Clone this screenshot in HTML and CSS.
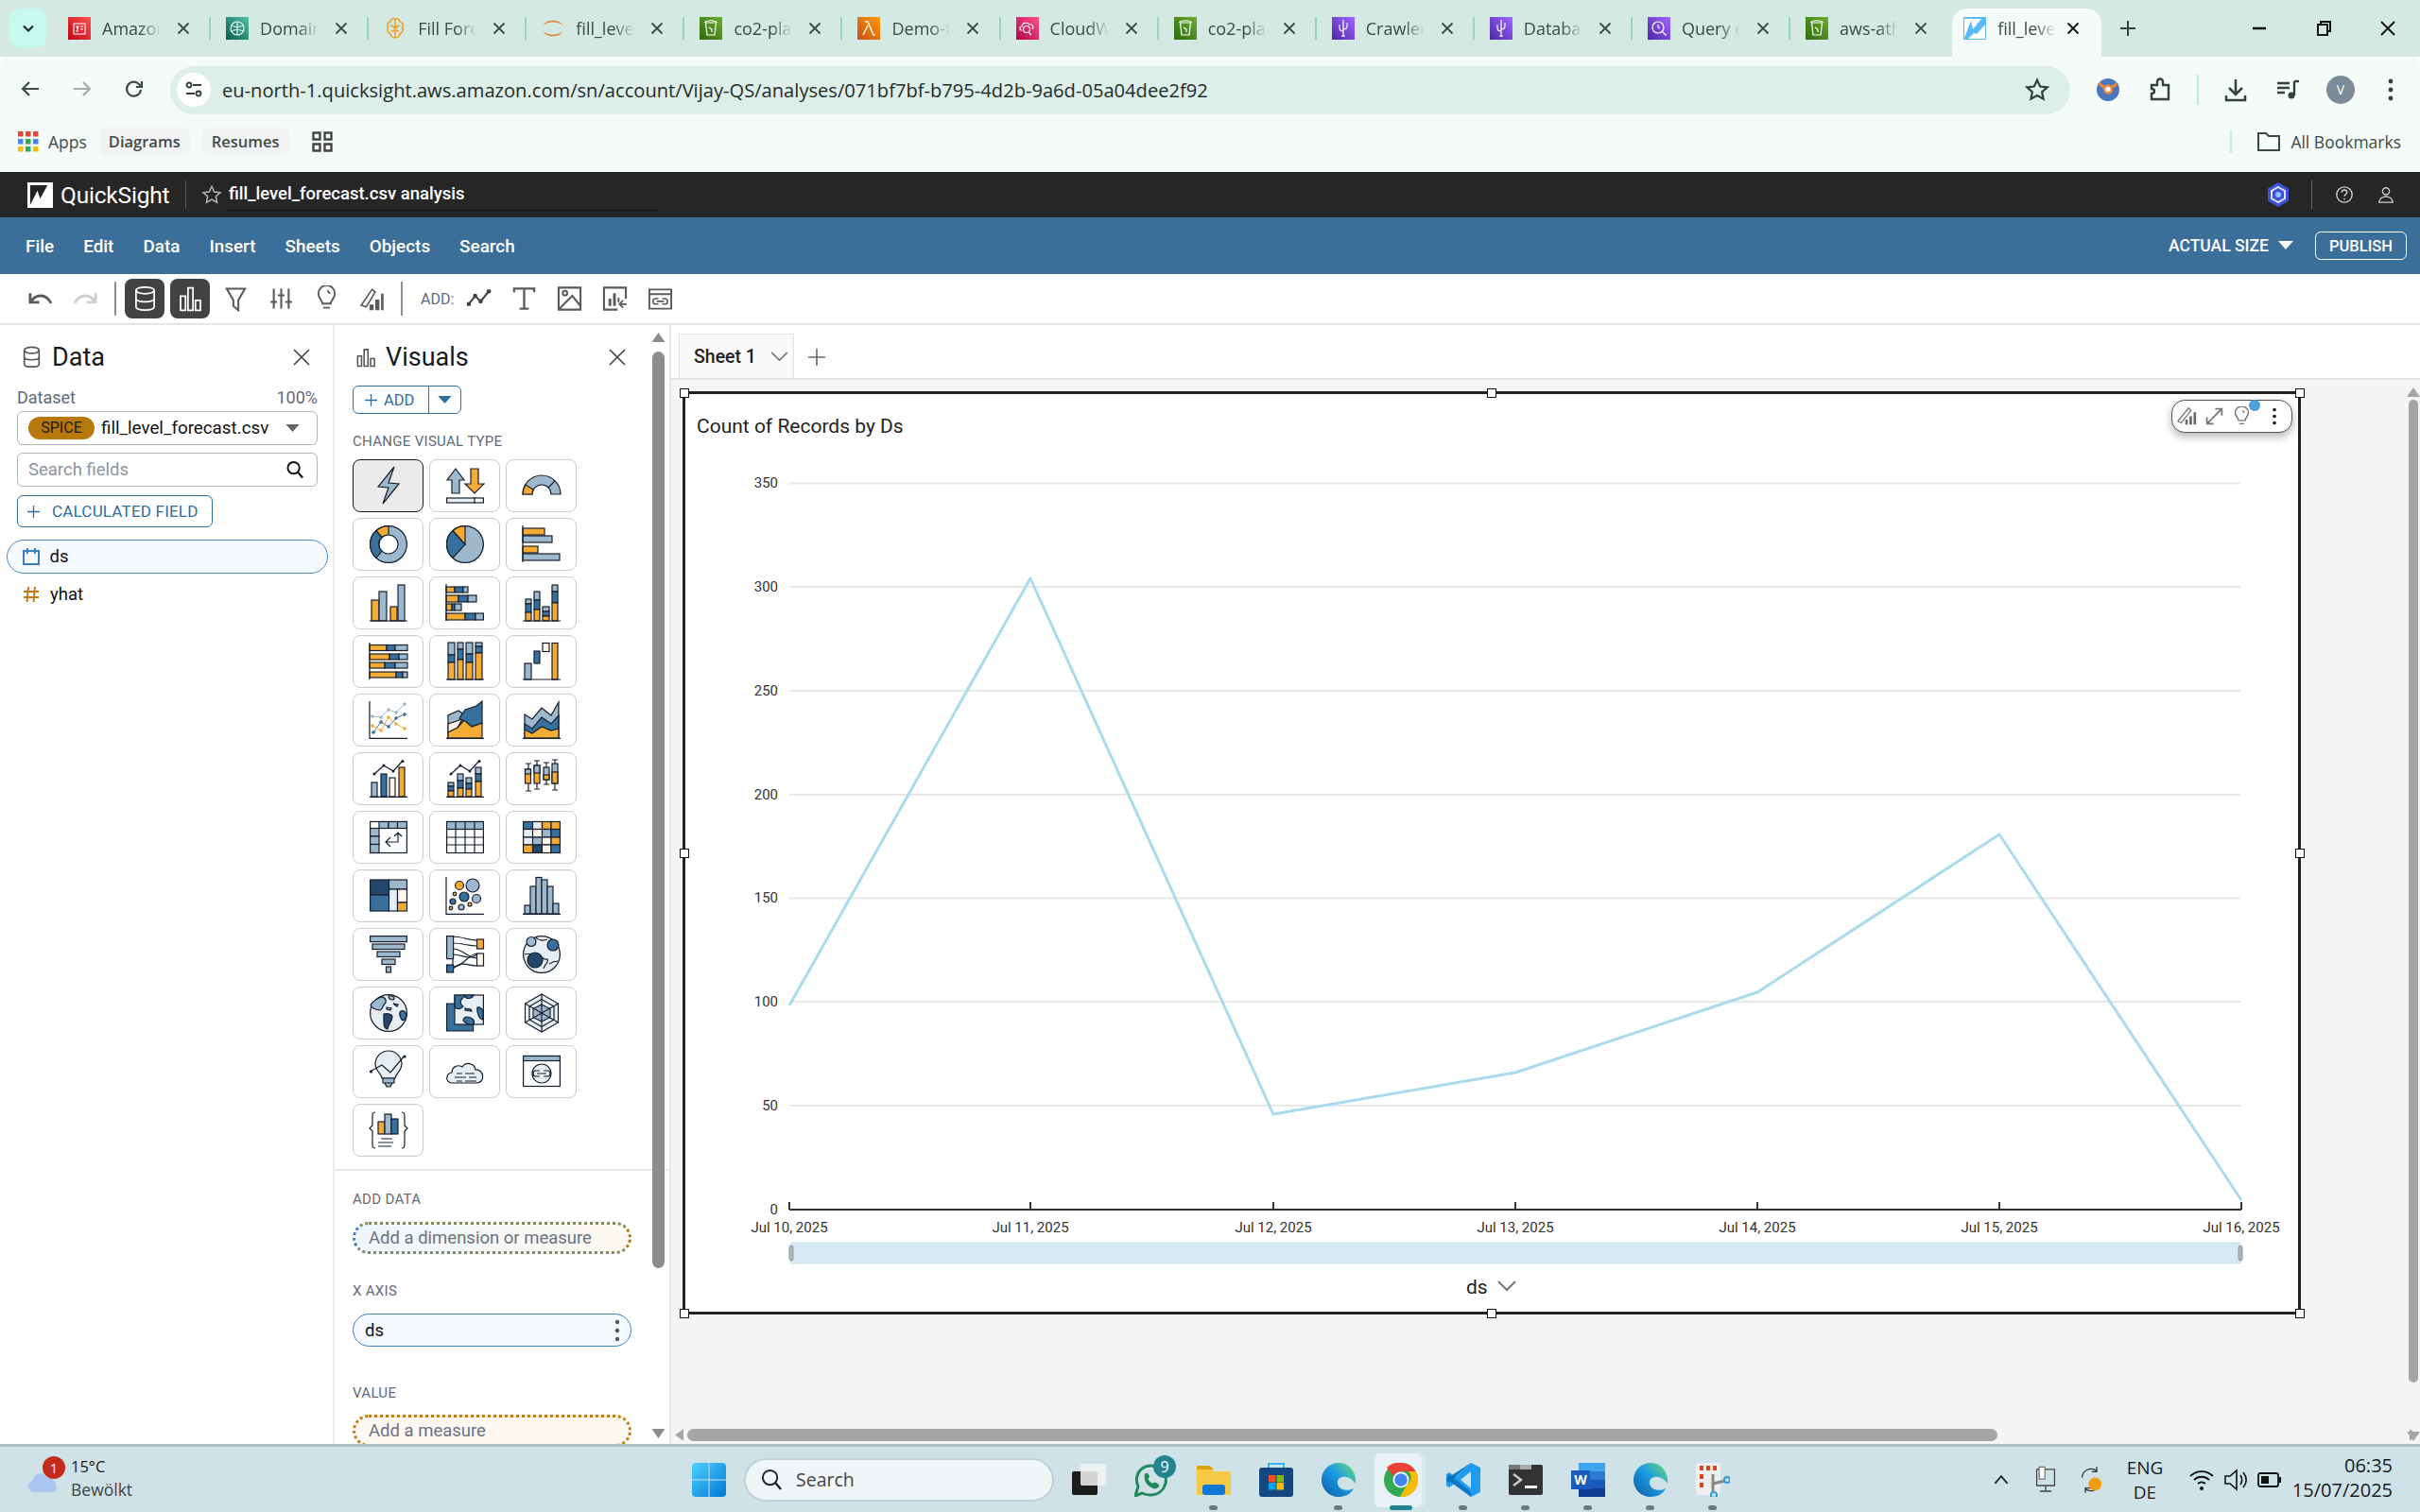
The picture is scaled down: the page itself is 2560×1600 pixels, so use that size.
FILE: index.html
```html
<!DOCTYPE html>
<html lang="en">
<head>
<meta charset="utf-8">
<title>QuickSight</title>
<link rel="stylesheet" href="styles.css">
</head>
<body>
<svg class="defs" width="0" height="0" aria-hidden="true">
  <defs>
    <linearGradient id="gGreen" x1="0" y1="1" x2="1" y2="0"><stop offset="0" stop-color="#2f6a12"/><stop offset="1" stop-color="#6aae2b"/></linearGradient>
    <linearGradient id="gPurple" x1="0" y1="1" x2="1" y2="0"><stop offset="0" stop-color="#4d27a8"/><stop offset="1" stop-color="#a166ff"/></linearGradient>
    <linearGradient id="gRed" x1="0" y1="1" x2="1" y2="0"><stop offset="0" stop-color="#bd0816"/><stop offset="1" stop-color="#ff5252"/></linearGradient>
    <linearGradient id="gTeal" x1="0" y1="1" x2="1" y2="0"><stop offset="0" stop-color="#055f4e"/><stop offset="1" stop-color="#56c0a7"/></linearGradient>
    <linearGradient id="gOrange" x1="0" y1="1" x2="1" y2="0"><stop offset="0" stop-color="#c8511b"/><stop offset="1" stop-color="#ff9900"/></linearGradient>
    <linearGradient id="gPink" x1="0" y1="1" x2="1" y2="0"><stop offset="0" stop-color="#b0084d"/><stop offset="1" stop-color="#ff4f8b"/></linearGradient>
    <linearGradient id="gEdge" x1="0" y1="1" x2="1" y2="0"><stop offset="0" stop-color="#0c59a4"/><stop offset=".55" stop-color="#1b9de2"/><stop offset="1" stop-color="#6ee06a"/></linearGradient>
    <linearGradient id="gWin" x1="0" y1="0" x2="1" y2="1"><stop offset="0" stop-color="#4fd0ff"/><stop offset="1" stop-color="#0078d4"/></linearGradient>
    <symbol id="fGreen" viewBox="0 0 24 24"><rect width="24" height="24" fill="url(#gGreen)"/><path d="M6.500 6h11l-1.500 13h-8zM5.500 6c1-3 12-3 13 0M10 11l3 2v3" fill="none" stroke="#fff" stroke-width="1.200"/></symbol>
    <symbol id="fGlue" viewBox="0 0 24 24"><rect width="24" height="24" fill="url(#gPurple)"/><path d="M12 3v18M12 15c-4 0-4-2-4-5M12 13c4 0 4-2 4-5M7 9h2M15 7h2M10 20h4" fill="none" stroke="#fff" stroke-width="1.200"/></symbol>
    <symbol id="fX" viewBox="0 0 16 16"><path d="M2.500 2.500l11 11M13.500 2.500l-11 11" fill="none" stroke="currentColor" stroke-width="1.800"/></symbol>
  </defs>
</svg>

<header class="tabstrip">
  <button class="chev"><svg width="16" height="16" viewBox="0 0 16 16"><path d="M3 5.500l5 5 5-5" fill="none" stroke="#1f2d2a" stroke-width="2.200"/></svg></button>
  <div class="tab"><svg class="fav" viewBox="0 0 24 24"><rect width="24" height="24" fill="url(#gRed)"/><path d="M6 7h12v11H6zM9 10h2l-1 3zM13 10h3M13 13h3M8 15h3" fill="none" stroke="#fff" stroke-width="1.100"/></svg><span class="tt">Amazon</span><svg class="tx"><use href="#fX"/></svg></div>
  <div class="tab"><svg class="fav" viewBox="0 0 24 24"><rect width="24" height="24" fill="url(#gTeal)"/><circle cx="12" cy="12" r="7" fill="none" stroke="#fff" stroke-width="1.100"/><path d="M12 5v14M6 9c4 2 8 2 12 0M6 15c4-2 8-2 12 0" fill="none" stroke="#fff" stroke-width="1"/></svg><span class="tt">Domain</span><svg class="tx"><use href="#fX"/></svg></div>
  <div class="tab"><svg class="fav" viewBox="0 0 24 24"><path d="M12 2c-3-1-5 1-5 3-3 1-4 4-2.500 6C3 13 4 17 7 17.500c0 3 3 5 5 4 2 1 5-1 5-4 3-.5 4-4.500 2.500-6.500C21 9 20 6 17 5c0-2-2-4-5-3zM12 2v20M7 9c2 0 3 1 5 3M17 9c-2 0-3 1-5 3M8 15l4-1M16 15l-4-1" fill="none" stroke="#f39c1f" stroke-width="1.500"/></svg><span class="tt">Fill Fore</span><svg class="tx"><use href="#fX"/></svg></div>
  <div class="tab"><svg class="fav" viewBox="0 0 24 24"><path d="M2 9C4 2 20 2 22 9 18 4 6 4 2 9zM2 15c2 7 18 7 20 0-4 5-16 5-20 0z" fill="#ea7a2c"/></svg><span class="tt">fill_level</span><svg class="tx"><use href="#fX"/></svg></div>
  <div class="tab"><svg class="fav"><use href="#fGreen"/></svg><span class="tt">co2-pla</span><svg class="tx"><use href="#fX"/></svg></div>
  <div class="tab"><svg class="fav" viewBox="0 0 24 24"><rect width="24" height="24" fill="url(#gOrange)"/><path d="M8 5h3l6 14h2M11 9l-5 10" fill="none" stroke="#fff" stroke-width="1.400"/></svg><span class="tt">Demo-f</span><svg class="tx"><use href="#fX"/></svg></div>
  <div class="tab"><svg class="fav" viewBox="0 0 24 24"><rect width="24" height="24" fill="url(#gPink)"/><path d="M6 14c-3 0-3-4 0-4 0-4 6-5 8-2 3-1 5 2 3 5M16 19l-3-3" fill="none" stroke="#fff" stroke-width="1.100"/><circle cx="11" cy="13" r="3.500" fill="none" stroke="#fff" stroke-width="1.100"/></svg><span class="tt">CloudW</span><svg class="tx"><use href="#fX"/></svg></div>
  <div class="tab"><svg class="fav"><use href="#fGreen"/></svg><span class="tt">co2-pla</span><svg class="tx"><use href="#fX"/></svg></div>
  <div class="tab"><svg class="fav"><use href="#fGlue"/></svg><span class="tt">Crawler</span><svg class="tx"><use href="#fX"/></svg></div>
  <div class="tab"><svg class="fav"><use href="#fGlue"/></svg><span class="tt">Databas</span><svg class="tx"><use href="#fX"/></svg></div>
  <div class="tab"><svg class="fav" viewBox="0 0 24 24"><rect width="24" height="24" fill="url(#gPurple)"/><circle cx="11" cy="11" r="6" fill="none" stroke="#fff" stroke-width="1.200"/><path d="M15.500 15.500l4 4M11 8v3l2 1" fill="none" stroke="#fff" stroke-width="1.200"/></svg><span class="tt">Query e</span><svg class="tx"><use href="#fX"/></svg></div>
  <div class="tab last"><svg class="fav"><use href="#fGreen"/></svg><span class="tt">aws-ath</span><svg class="tx"><use href="#fX"/></svg></div>
  <div class="tab active"><svg class="fav" viewBox="0 0 24 24"><rect width="24" height="24" fill="#59baf5"/><path d="M1 22L8 4l2 9 9-11H1zM5 23l6-6 3 1 9-10v15z" fill="#fff"/></svg><span class="tt">fill_level</span><svg class="tx dark"><use href="#fX"/></svg></div>
  <svg class="newtab" viewBox="0 0 20 20"><path d="M10 2v16M2 10h16" fill="none" stroke="#33413d" stroke-width="2"/></svg>
  <div class="winctl">
    <svg viewBox="0 0 20 20"><path d="M3 10h14" stroke="#111" stroke-width="2.500"/></svg>
    <svg viewBox="0 0 20 20"><path d="M4 6h10v11H4zM7 6V3h10v10h-3" fill="none" stroke="#111" stroke-width="2"/></svg>
    <svg viewBox="0 0 20 20"><path d="M3 3l14 14M17 3L3 17" fill="none" stroke="#111" stroke-width="1.800"/></svg>
  </div>
</header>

<nav class="addr">
  <svg class="nv" viewBox="0 0 24 24"><path d="M21 12H4M11 5l-7 7 7 7" fill="none" stroke="#3c4a46" stroke-width="2.200"/></svg>
  <svg class="nv" viewBox="0 0 24 24"><path d="M3 12h17M13 5l7 7-7 7" fill="none" stroke="#a5aeab" stroke-width="2.200"/></svg>
  <svg class="nv" viewBox="0 0 24 24"><path d="M19 13a7.500 7.500 0 1 1-2-6l3 3M20 4v6h-6" fill="none" stroke="#3c4a46" stroke-width="2.200"/></svg>
  <div class="url">
    <span class="chip"><svg width="20" height="20" viewBox="0 0 20 20"><circle cx="5" cy="5" r="2.500" fill="none" stroke="#33413d" stroke-width="1.800"/><path d="M9 5h9M2 14h9" stroke="#33413d" stroke-width="1.800"/><circle cx="15" cy="14" r="2.500" fill="none" stroke="#33413d" stroke-width="1.800"/></svg></span>
    <span class="urltext">eu-north-1.quicksight.aws.amazon.com/sn/account/Vijay-QS/analyses/071bf7bf-b795-4d2b-9a6d-05a04dee2f92</span>
    <svg class="star" viewBox="0 0 24 24"><path d="M12 2.500l2.900 6.300 6.900.8-5.100 4.600 1.400 6.800-6.100-3.400-6.100 3.400 1.400-6.800L2.200 9.600l6.900-.8z" fill="none" stroke="#33413d" stroke-width="2"/></svg>
  </div>
  <div class="navright">
    <svg class="ni" viewBox="0 0 28 28"><circle cx="14" cy="14" r="12" fill="#4a76bf"/><path d="M5 7c3 6 15 6 18 0" fill="none" stroke="#e8863a" stroke-width="3"/><circle cx="14" cy="13.500" r="4" fill="#fff" stroke="#e8863a" stroke-width="2.500"/></svg>
    <svg class="ni" viewBox="0 0 28 28"><path d="M5 9h6V5.500a3 3 0 0 1 6 0V9h6v15H5v-6c4 0 4-5 0-5z" fill="none" stroke="#33413d" stroke-width="2.400"/></svg>
    <i class="navsep"></i>
    <svg class="ni" viewBox="0 0 28 28"><path d="M14 3v15M7 12l7 7 7-7M4 20v5h20v-5" fill="none" stroke="#33413d" stroke-width="2.500"/></svg>
    <svg class="ni" viewBox="0 0 28 28"><path d="M3 7h13M3 12h13M3 17h8M21 5v15" fill="none" stroke="#33413d" stroke-width="2.400"/><path d="M21 5h5" stroke="#33413d" stroke-width="2.400"/><circle cx="18" cy="20" r="3.500" fill="#33413d"/></svg>
    <span class="avatar">V</span>
    <svg class="dots" viewBox="0 0 12 28"><circle cx="6" cy="5" r="2.400" fill="#33413d"/><circle cx="6" cy="14" r="2.400" fill="#33413d"/><circle cx="6" cy="23" r="2.400" fill="#33413d"/></svg>
  </div>
</nav>

<nav class="bookmarks">
  <svg class="appsgrid" viewBox="0 0 22 22"><g fill="#ea4335"><rect width="5.500" height="5.500"/><rect x="8" width="5.500" height="5.500"/><rect x="16" width="5.500" height="5.500"/></g><g fill="#4285f4"><rect y="8" width="5.500" height="5.500"/><rect x="8" y="8" width="5.500" height="5.500" fill="#34a853"/><rect x="16" y="8" width="5.500" height="5.500" fill="#4285f4"/></g><g fill="#fbbc04"><rect y="16" width="5.500" height="5.500"/><rect x="8" y="16" width="5.500" height="5.500" fill="#34a853"/><rect x="16" y="16" width="5.500" height="5.500"/></g></svg>
  <span class="bm apps">Apps</span>
  <span class="bmchip">Diagrams</span>
  <span class="bmchip">Resumes</span>
  <svg class="bmgroup" viewBox="0 0 22 22"><path d="M1.500 1.500h7v7h-7zM13.500 1.500h7v7h-7zM1.500 13.500h7v7h-7zM13.500 13.500h7v7h-7z" fill="none" stroke="#444" stroke-width="2.400"/></svg>
  <i class="bmsep"></i>
  <svg class="bmfolder" viewBox="0 0 26 24"><path d="M2 3h8l3 3h11v15H2z" fill="none" stroke="#3c4a46" stroke-width="2"/></svg>
  <span class="bm">All Bookmarks</span>
</nav>

<div class="qs-head">
  <svg class="qslogo" viewBox="0 0 28 28"><rect width="28" height="28" fill="#fff"/><path d="M3 25L11 9l3 9 8-15H3z" fill="#232323"/></svg>
  <span class="qsname">QuickSight</span>
  <i class="qssep"></i>
  <svg class="qsstar" viewBox="0 0 24 24"><path d="M12 2.500l2.900 6.300 6.900.8-5.100 4.600 1.400 6.800-6.100-3.400-6.100 3.400 1.400-6.800L2.200 9.600l6.900-.8z" fill="none" stroke="#b8b8b8" stroke-width="1.600"/></svg>
  <span class="qstitle">fill_level_forecast.csv analysis</span>
  <div class="qsright">
    <svg class="qsi" viewBox="0 0 28 28"><path d="M14 1l11 6.500v13L14 27 3 20.500v-13z" fill="#3f51d9"/><path d="M14 6l7 4v8l-7 4-7-4v-8z" fill="none" stroke="#dfe4ff" stroke-width="2"/><circle cx="14" cy="14" r="3" fill="#8ec5ff"/></svg>
    <i class="qssep2"></i>
    <svg class="qsi small" viewBox="0 0 22 22"><circle cx="11" cy="11" r="9" fill="none" stroke="#cfcfcf" stroke-width="1.500"/><path d="M8 8.500c0-4 6-4 6 0 0 2-3 2-3 4.500M11 15v2" fill="none" stroke="#cfcfcf" stroke-width="1.500"/></svg>
    <svg class="qsi small" viewBox="0 0 22 22"><circle cx="11" cy="7" r="4" fill="none" stroke="#cfcfcf" stroke-width="1.500"/><path d="M3 20c1-9 15-9 16 0z" fill="none" stroke="#cfcfcf" stroke-width="1.500"/></svg>
  </div>
</div>

<div class="menu">
  <span>File</span><span>Edit</span><span>Data</span><span>Insert</span><span>Sheets</span><span>Objects</span><span>Search</span>
  <div class="menuright">
    <span class="actual">ACTUAL SIZE</span>
    <svg class="caret" viewBox="0 0 16 10"><path d="M0 0h16L8 9z" fill="#fff"/></svg>
    <button class="publish">PUBLISH</button>
  </div>
</div>

<div class="toolbar">
  <span class="tb"><svg viewBox="0 0 28 28"><path d="M3 8v10h10" fill="none" stroke="#5a5a5a" stroke-width="3"/><path d="M4 17c5-8 16-9 22 2" fill="none" stroke="#5a5a5a" stroke-width="3"/></svg></span>
  <span class="tb"><svg viewBox="0 0 28 28"><path d="M25 8v10H15" fill="none" stroke="#cfcfcf" stroke-width="3"/><path d="M24 17c-5-8-16-9-22 2" fill="none" stroke="#cfcfcf" stroke-width="3"/></svg></span>
  <i class="tbsep"></i>
  <span class="tb on"><svg viewBox="0 0 28 32"><ellipse cx="14" cy="6" rx="11" ry="4" fill="none" stroke="#fff" stroke-width="2"/><path d="M3 6v20c0 5 22 5 22 0V6M3 16c0 5 22 5 22 0" fill="none" stroke="#fff" stroke-width="2"/></svg></span>
  <span class="tb on"><svg viewBox="0 0 28 32"><path d="M2 13h6v17H2zM11 3h6v27h-6zM20 18h6v12h-6z" fill="none" stroke="#fff" stroke-width="2"/></svg></span>
  <span class="tb"><svg viewBox="0 0 28 32"><path d="M3 4h22l-8 14v12l-6-5v-7z" fill="none" stroke="#5a5a5a" stroke-width="2.400"/></svg></span>
  <span class="tb"><svg viewBox="0 0 28 32"><path d="M5 4v24M14 4v24M23 4v24M1 20h8M10 12h8M19 20h8" fill="none" stroke="#5a5a5a" stroke-width="2.400"/></svg></span>
  <span class="tb"><svg viewBox="0 0 28 32"><path d="M9 22c0-4-5-6-5-12a10 10 0 0 1 20 0c0 6-5 8-5 12zM10 27h8M15 6l3 4" fill="none" stroke="#5a5a5a" stroke-width="2.200"/></svg></span>
  <span class="tb"><svg viewBox="0 0 28 32"><path d="M1 24L14 5l4 3L7 26z" fill="none" stroke="#5a5a5a" stroke-width="1.800"/><path d="M11 23h5v7h-5zM18 17h5v13h-5zM25 10h3v20h-3z" fill="#5a5a5a"/></svg></span>
  <i class="tbsep"></i>
  <span class="addlbl">ADD:</span>
  <span class="tb first"><svg viewBox="0 0 28 28"><path d="M3 20l7-9 6 6 9-11" fill="none" stroke="#444" stroke-width="2.200"/><g fill="#444"><circle cx="3" cy="20" r="2.400"/><circle cx="10" cy="11" r="2.400"/><circle cx="16" cy="17" r="2.400"/><circle cx="25" cy="6" r="2.400"/></g></svg></span>
  <span class="tb"><svg viewBox="0 0 28 28"><path d="M3 7V3h22v4M14 3v22M9 25h10" fill="none" stroke="#5a5a5a" stroke-width="2.400"/></svg></span>
  <span class="tb"><svg viewBox="0 0 28 28"><path d="M2 2h24v24H2zM2 26L17 11l9 11" fill="none" stroke="#5a5a5a" stroke-width="2.200"/><circle cx="9" cy="8" r="2.500" fill="none" stroke="#5a5a5a" stroke-width="2"/></svg></span>
  <span class="tb"><svg viewBox="0 0 28 28"><path d="M26 14V2H2v24h15" fill="none" stroke="#5a5a5a" stroke-width="2.200"/><path d="M7 14h3v8H7zM12 8h3v14h-3zM17 13h2v5h-2z" fill="#5a5a5a"/><path d="M27 20H20M23 16l-4 4 4 4" fill="none" stroke="#5a5a5a" stroke-width="1.800"/></svg></span>
  <span class="tb"><svg viewBox="0 0 28 28"><path d="M2 4h24v21H2zM2 9h24" fill="none" stroke="#5a5a5a" stroke-width="2"/><path d="M12 14H9a3 3 0 0 0 0 6h3M16 14h3a3 3 0 0 1 0 6h-3M10 17h8" fill="none" stroke="#5a5a5a" stroke-width="1.600"/></svg></span>
</div>

<main class="work">
  <aside class="datapane">
    <div class="ptitle">
      <svg class="pti" viewBox="0 0 20 26"><ellipse cx="10" cy="5" rx="8.500" ry="3.500" fill="none" stroke="#555" stroke-width="1.800"/><path d="M1.500 5v16c0 4 17 4 17 0V5M1.500 13c0 4 17 4 17 0" fill="none" stroke="#555" stroke-width="1.800"/></svg>
      <span>Data</span>
      <svg class="pclose" viewBox="0 0 18 18"><path d="M1 1l16 16M17 1L1 17" fill="none" stroke="#444" stroke-width="1.700"/></svg>
    </div>
    <div class="dsrow"><span>Dataset</span><span>100%</span></div>
    <div class="dsselect"><span class="spice">SPICE</span><span class="dsname">fill_level_forecast.csv</span><svg class="dsarrow" viewBox="0 0 16 10"><path d="M0 0h16L8 9z" fill="#666"/></svg></div>
    <div class="fsearch"><span>Search fields</span><svg viewBox="0 0 20 20"><circle cx="8" cy="8" r="6.500" fill="none" stroke="#111" stroke-width="2"/><path d="M12.500 12.500L18 19" stroke="#111" stroke-width="2.400"/></svg></div>
    <button class="calc"><svg viewBox="0 0 14 14"><path d="M7 0v14M0 7h14" stroke="#2e6e9e" stroke-width="1.400"/></svg>CALCULATED FIELD</button>
    <div class="field sel"><svg viewBox="0 0 18 18"><path d="M1 3h16v14H1zM5 0v6M13 0v6" fill="none" stroke="#3a7fc1" stroke-width="2"/></svg><span>ds</span></div>
    <div class="field"><svg viewBox="0 0 18 18"><path d="M6 1L4.500 17M13 1l-1.500 16M1 6h16M1 12h16" fill="none" stroke="#c47a12" stroke-width="2"/></svg><span>yhat</span></div>
  </aside>

  <aside class="vispane">
    <div class="ptitle vis">
      <svg class="pti" viewBox="0 0 22 22"><path d="M1.500 9h4.500v12H1.500zM9 1.500h4.500V21H9zM16.500 12h4.500v9h-4.500z" fill="none" stroke="#555" stroke-width="1.700"/></svg>
      <span>Visuals</span>
      <svg class="pclose" viewBox="0 0 18 18"><path d="M1 1l16 16M17 1L1 17" fill="none" stroke="#444" stroke-width="1.700"/></svg>
    </div>
    <div class="addbtn"><span class="addmain"><svg viewBox="0 0 14 14"><path d="M7 0v14M0 7h14" stroke="#2e6e9e" stroke-width="1.400"/></svg>ADD</span><span class="addcaret"><svg viewBox="0 0 16 10"><path d="M0 0h16L8 9z" fill="#2e6e9e"/></svg></span></div>
    <div class="seclabel first">CHANGE VISUAL TYPE</div>
    <div class="vgrid">
      <div class="vt cur"><svg class="vi" viewBox="0 0 40 40"><path class="l" d="M26 0L9 21l11 1-6 17 17-21-11-1z"/></svg></div>
      <div class="vt"><svg class="vi" viewBox="0 0 40 40"><path class="l" d="M10 2l9 12h-5v14H6V14H1z"/><path class="o" d="M26 2h8v16h6L30 28 20 18h6z"/><rect class="p" x="0.600" y="33" width="30" height="5"/><rect class="w" x="30" y="33" width="9.400" height="5"/></svg></div>
      <div class="vt"><svg class="vi" viewBox="0 0 40 40"><path class="l" d="M0 29A20 20 0 0 1 40 29H30A10 10 0 0 0 10 29z"/><path class="o" d="M0 29A20 20 0 0 1 3 19l8 5a10 10 0 0 0-1 5z"/><path class="st" d="M34 15l-7 7"/></svg></div>

      <div class="vt"><svg class="vi" viewBox="0 0 40 40"><circle class="l" cx="20" cy="20" r="19.400"/><path class="d" d="M7 5.500A19.400 19.400 0 0 0 7 34.500L13 27a10 10 0 0 1 0-14.500z"/><path class="o" d="M20 .6A19.400 19.400 0 0 0 7 5.500l6 7A10 10 0 0 1 20 10z"/><circle class="w" cx="20" cy="20" r="10"/></svg></div>
      <div class="vt"><svg class="vi" viewBox="0 0 40 40"><circle class="l" cx="20" cy="20" r="19.400"/><path class="d" d="M20 20L7 5.500A19.400 19.400 0 0 0 7 34.500z"/><path class="o" d="M20 20V.6A19.400 19.400 0 0 0 7 5.500z"/></svg></div>
      <div class="vt"><svg class="vi" viewBox="0 0 40 40"><rect class="o" x="0" y="3" width="23" height="7"/><rect class="l" x="0" y="11" width="31" height="7"/><rect class="o" x="0" y="22" width="16" height="7"/><rect class="l" x="0" y="30" width="39" height="7"/><path class="st" d="M0 0v39"/></svg></div>

      <div class="vt"><svg class="vi" viewBox="0 0 40 40"><rect class="o" x="2" y="17" width="8" height="22"/><rect class="l" x="10" y="8" width="8" height="31"/><rect class="o" x="22" y="24" width="7" height="15"/><rect class="l" x="30" y="1" width="7" height="38"/><path class="st" d="M0 39h40"/></svg></div>
      <div class="vt"><svg class="vi" viewBox="0 0 40 40"><rect class="o" y="3" width="9" height="6"/><rect class="d" x="9" y="3" width="9" height="6"/><rect class="l" x="18" y="3" width="5" height="6"/><rect class="o" y="12" width="13" height="7"/><rect class="d" x="13" y="12" width="10" height="7"/><rect class="l" x="23" y="12" width="9" height="7"/><rect class="o" y="21" width="6" height="7"/><rect class="d" x="6" y="21" width="3" height="7"/><rect class="l" x="9" y="21" width="7" height="7"/><rect class="o" y="31" width="20" height="7"/><rect class="d" x="20" y="31" width="11" height="7"/><rect class="l" x="31" y="31" width="8.400" height="7"/><path class="st" d="M0 0v39"/></svg></div>
      <div class="vt"><svg class="vi" viewBox="0 0 40 40"><rect class="l" x="3" y="16" width="6" height="5"/><rect class="d" x="3" y="21" width="6" height="9"/><rect class="o" x="3" y="30" width="6" height="9"/><rect class="l" x="12" y="8" width="6" height="9"/><rect class="d" x="12" y="17" width="6" height="10"/><rect class="o" x="12" y="27" width="6" height="12"/><rect class="l" x="21" y="24" width="7" height="5"/><rect class="d" x="21" y="29" width="7" height="5"/><rect class="o" x="21" y="34" width="7" height="5"/><rect class="l" x="31" y="1" width="6" height="7"/><rect class="d" x="31" y="8" width="6" height="12"/><rect class="o" x="31" y="20" width="6" height="19"/><path class="st" d="M0 39h40"/></svg></div>

      <div class="vt"><svg class="vi" viewBox="0 0 40 40"><rect class="o" y="2.500" width="18" height="6"/><rect class="d" x="18" y="2.500" width="9" height="6"/><rect class="l" x="27" y="2.500" width="13" height="6"/><rect class="o" y="12" width="21" height="6"/><rect class="d" x="21" y="12" width="10" height="6"/><rect class="l" x="31" y="12" width="9" height="6"/><rect class="o" y="21" width="16" height="6"/><rect class="d" x="16" y="21" width="11" height="6"/><rect class="l" x="27" y="21" width="13" height="6"/><rect class="o" y="31" width="28" height="6"/><rect class="d" x="28" y="31" width="7" height="6"/><rect class="l" x="35" y="31" width="5" height="6"/><path class="st" d="M0 0v39"/></svg></div>
      <div class="vt"><svg class="vi" viewBox="0 0 40 40"><rect class="l" x="2" y="0" width="7" height="13"/><rect class="d" x="2" y="13" width="7" height="8"/><rect class="o" x="2" y="21" width="7" height="18"/><rect class="l" x="12" y="0" width="6" height="7"/><rect class="d" x="12" y="7" width="6" height="11"/><rect class="o" x="12" y="18" width="6" height="21"/><rect class="l" x="21" y="0" width="7" height="12"/><rect class="d" x="21" y="12" width="7" height="9"/><rect class="o" x="21" y="21" width="7" height="18"/><rect class="l" x="31" y="0" width="7" height="4"/><rect class="d" x="31" y="4" width="7" height="7"/><rect class="o" x="31" y="11" width="7" height="28"/><path class="st" d="M0 39h40"/></svg></div>
      <div class="vt"><svg class="vi" viewBox="0 0 40 40"><rect class="l" x="2" y="22" width="7" height="17"/><rect class="d" x="12" y="9" width="6" height="13"/><rect class="c" x="21" y="0.500" width="7" height="9"/><rect class="o" x="31" y="0.500" width="6" height="38.500"/><path class="st" d="M0 39h40"/></svg></div>

      <div class="vt"><svg class="vi" viewBox="0 0 40 40"><path class="st" d="M0 0v39.400h40"/><g class="ln lb"><path d="M3 16l9 1 8-8 8 3 9-9"/><circle cx="3" cy="16" r="1.300"/><circle cx="12" cy="17" r="1.300"/><circle cx="20" cy="9" r="1.300"/><circle cx="28" cy="12" r="1.300"/><circle cx="37" cy="3" r="1.300"/></g><g class="ln db"><path d="M4 33l8-11 8 5 8-9 9-4"/><circle cx="4" cy="33" r="1.300"/><circle cx="12" cy="22" r="1.300"/><circle cx="20" cy="27" r="1.300"/><circle cx="28" cy="18" r="1.300"/><circle cx="37" cy="14" r="1.300"/></g><g class="ln ob"><path d="M3 26l9 5 8-14 8 7 9 5"/><circle cx="3" cy="26" r="1.300"/><circle cx="12" cy="31" r="1.300"/><circle cx="20" cy="17" r="1.300"/><circle cx="28" cy="24" r="1.300"/><circle cx="37" cy="29" r="1.300"/></g></svg></div>
      <div class="vt"><svg class="vi" viewBox="0 0 40 40"><path class="l" d="M2 39V15l11-5 7 5-6 9-12 6z"/><path class="c" d="M2 33v-9l9-3 6-2-5 9z"/><path class="d" d="M14 18l6-9 12-4 6-5v24l-14 3-6-6z"/><path class="o" d="M2 39v-6l10-5 7-8 8 7 11-4v16z"/><path class="st" d="M0 39.400h40"/></svg></div>
      <div class="vt"><svg class="vi" viewBox="0 0 40 40"><path class="l" d="M2 14l8 5 10-12 10 8 8-14v28H2z"/><path class="d" d="M2 24l8 5 10-12 10 7 8-9v24H2z"/><path class="o" d="M2 30l8 4 10-7 10 4 8-2v10H2z"/><path class="st" d="M0 39.400h40"/></svg></div>

      <div class="vt"><svg class="vi" viewBox="0 0 40 40"><rect class="l" x="2" y="24" width="6" height="15"/><rect class="d" x="12" y="15" width="6" height="24"/><rect class="c" x="21" y="19" width="6" height="20"/><rect class="o" x="31" y="8" width="6" height="31"/><path class="st" d="M0 39.400h40M5 15l10-9 10 6 10-11"/><g class="dt"><circle cx="5" cy="15" r="1.500"/><circle cx="15" cy="6" r="1.500"/><circle cx="25" cy="12" r="1.500"/><circle cx="35" cy="1.500" r="1.500"/></g></svg></div>
      <div class="vt"><svg class="vi" viewBox="0 0 40 40"><rect class="l" x="2" y="24" width="6" height="4"/><rect class="d" x="2" y="28" width="6" height="5"/><rect class="o" x="2" y="33" width="6" height="6"/><rect class="l" x="12" y="15" width="6" height="7"/><rect class="d" x="12" y="22" width="6" height="8"/><rect class="o" x="12" y="30" width="6" height="9"/><rect class="l" x="21" y="19" width="6" height="6"/><rect class="d" x="21" y="25" width="6" height="6"/><rect class="o" x="21" y="31" width="6" height="8"/><rect class="l" x="31" y="8" width="6" height="7"/><rect class="d" x="31" y="15" width="6" height="8"/><rect class="o" x="31" y="23" width="6" height="16"/><path class="st" d="M0 39.400h40M5 15l10-9 10 6 10-11"/><g class="dt"><circle cx="5" cy="15" r="1.500"/><circle cx="15" cy="6" r="1.500"/><circle cx="25" cy="12" r="1.500"/><circle cx="35" cy="1.500" r="1.500"/></g></svg></div>
      <div class="vt"><svg class="vi" viewBox="0 0 40 40"><path class="st" d="M6 4v29M3 4h6M3 33h6M15 1v30M12 1h6M12 31h6M25 3v23M22 3h6M22 26h6M34 0v32M31 0h6M31 32h6"/><rect class="o" x="2.500" y="10" width="6" height="15"/><rect class="l" x="2.500" y="10" width="6" height="5"/><rect class="o" x="12" y="6" width="6" height="19"/><rect class="l" x="12" y="6" width="6" height="8"/><rect class="l" x="22" y="8" width="6" height="13"/><rect class="o" x="22" y="16" width="6" height="5"/><rect class="l" x="31" y="4" width="6" height="21"/><rect class="o" x="31" y="13" width="6" height="12"/></svg></div>

      <div class="vt"><svg class="vi" viewBox="0 0 40 40"><rect class="w" x="0.600" y="3.500" width="38.800" height="33"/><rect class="l" x="10" y="3.500" width="10" height="7"/><rect class="l" x="20" y="3.500" width="9.500" height="7"/><rect class="l" x="29.500" y="3.500" width="9.900" height="7"/><rect class="l" x="0.600" y="10.500" width="9.400" height="8.500"/><rect class="l" x="0.600" y="19" width="9.400" height="8.500"/><rect class="l" x="0.600" y="27.500" width="9.400" height="9"/><path class="st" d="M30 15v10H18M22 20l-5 5 5 5M26 19l4-4 4 4"/></svg></div>
      <div class="vt"><svg class="vi" viewBox="0 0 40 40"><rect class="w" x="0.600" y="3.500" width="38.800" height="33"/><rect class="l" x="0.600" y="3.500" width="38.800" height="8"/><path class="st" d="M10 3.500v33M20 3.500v33M30 3.500v33M0.600 11.500h38.800M0.600 20h38.800M0.600 28h38.800"/></svg></div>
      <div class="vt"><svg class="vi" viewBox="0 0 40 40"><rect class="d" x="0.600" y="3.500" width="10" height="8"/><rect class="p" x="10.500" y="3.500" width="10" height="8"/><rect class="o" x="20.500" y="3.500" width="9.500" height="8"/><rect class="o" x="30" y="3.500" width="9.400" height="8"/><rect class="p" x="0.600" y="11.500" width="10" height="8.500"/><rect class="c" x="10.500" y="11.500" width="10" height="8.500"/><rect class="l" x="20.500" y="11.500" width="9.500" height="8.500"/><rect class="d" x="30" y="11.500" width="9.400" height="8.500"/><rect class="p" x="0.600" y="20" width="10" height="8"/><rect class="l" x="10.500" y="20" width="10" height="8"/><rect class="c" x="20.500" y="20" width="9.500" height="8"/><rect class="o" x="30" y="20" width="9.400" height="8"/><rect class="o" x="0.600" y="28" width="10" height="8.500"/><rect class="n" x="10.500" y="28" width="10" height="8.500"/><rect class="c" x="20.500" y="28" width="9.500" height="8.500"/><rect class="d" x="30" y="28" width="9.400" height="8.500"/></svg></div>

      <div class="vt"><svg class="vi" viewBox="0 0 40 40"><rect class="n" x="0.600" y="3" width="20" height="16"/><rect class="d" x="0.600" y="19" width="20" height="17"/><rect class="l" x="20.500" y="3" width="19" height="10"/><rect class="p" x="20.500" y="13" width="9" height="23"/><rect class="c" x="29.500" y="13" width="10" height="14"/><rect class="o" x="29.500" y="27" width="10" height="9"/></svg></div>
      <div class="vt"><svg class="vi" viewBox="0 0 40 40"><path class="st" d="M0 0v39.400h40"/><circle class="l" cx="28" cy="9" r="7"/><circle class="o" cx="14" cy="9" r="4.500"/><circle class="o" cx="9" cy="18" r="1.800"/><circle class="d" cx="19" cy="21" r="5"/><circle class="l" cx="32" cy="23" r="4.500"/><circle class="d" cx="7" cy="26" r="3"/><circle class="l" cx="16" cy="32" r="3"/><circle class="o" cx="25" cy="29" r="2"/><circle class="o" cx="5" cy="33" r="1.800"/></svg></div>
      <div class="vt"><svg class="vi" viewBox="0 0 40 40"><rect class="l" x="2" y="30" width="6" height="9"/><rect class="l" x="8" y="10" width="6" height="29"/><rect class="l" x="14" y="0.500" width="6" height="38.500"/><rect class="l" x="20" y="3" width="6" height="36"/><rect class="l" x="26" y="10" width="6" height="29"/><rect class="l" x="32" y="28" width="6" height="11"/><path class="st" d="M0 39.400h40"/></svg></div>

      <div class="vt"><svg class="vi" viewBox="0 0 40 40"><rect class="l" x="0.600" y="0.600" width="38.800" height="6"/><rect class="l" x="3" y="9" width="34" height="5.500"/><rect class="l" x="8" y="17" width="24" height="5.500"/><rect class="l" x="13" y="25" width="14" height="5.500"/><rect class="l" x="17.500" y="33" width="5" height="6"/></svg></div>
      <div class="vt"><svg class="vi" viewBox="0 0 40 40"><path class="w" d="M7 1c10 0 16 4 26 4v6C23 11 17 8 7 8zM7 20c12 0 16 7 26 0v12c-12 0-14-6-26 3z"/><path class="st" d="M7 14c10 0 16 10 26 10M7 33c12 0 16-14 26-14"/><rect class="l" x="0.600" y="0.600" width="7" height="24"/><rect class="d" x="0.600" y="31" width="7" height="8"/><rect class="o" x="32.500" y="4" width="7" height="10"/><rect class="c" x="32.500" y="19" width="7" height="13"/></svg></div>
      <div class="vt"><svg class="vi" viewBox="0 0 40 40"><circle class="p" cx="20" cy="20" r="19.400"/><path class="st" d="M14 2c2 3 8 4 12 2M2 20c5-2 10 0 14 2 4 0 6 4 10 3 2 4-3 5-4 10M28 30c3-2 6-3 9-3"/><circle class="l" cx="9" cy="6.500" r="5"/><circle class="d" cx="32" cy="10" r="6"/><circle class="n" cx="13" cy="26" r="8"/></svg></div>

      <div class="vt"><svg class="vi" viewBox="0 0 40 40"><circle class="p" cx="20" cy="20" r="19.400"/><path class="l" d="M10 4c4-2 8 0 7 5-3 2-3 7-6 8-5 0-9-3-10-5 1-3 5-6 9-8zM20 2c5-1 8 2 5 4-3 0-5-1-5-4z"/><path class="n" d="M15 21c4-1 9 0 9 3 0 4-4 7-5 13-3 0-4-3-4-8z"/><path class="l" d="M18 14l5 1-1 2-4-1zM25 10l5 1-1 2z"/><path class="d" d="M33 18c3-1 6 1 6 5-1 3-3 6-5 4-2-3-3-7-1-9z"/></svg></div>
      <div class="vt"><svg class="vi" viewBox="0 0 40 40"><path class="d" d="M0.600 10h28v29h-28z"/><rect class="p" x="9" y="1" width="30.400" height="31"/><path class="d" d="M9 1h11l-4 5c-2 2 0 6 2 7-3 4-6 3-9 1zM20 1h9c-1 3-6 5-9 2zM22 24c-3 0-5 3-3 5l4 3h6c2-4-2-8-7-8zM33 14c3-1 5 2 6 4v9c-4 0-7-8-6-13zM20 15l6 1 1 2-7-1z"/></svg></div>
      <div class="vt"><svg class="vi" viewBox="0 0 40 40"><path class="p" d="M20 0l17.500 10v20L20 40 2.500 30V10z"/><path class="st" d="M20 5.500l13 7.500v14l-13 7.500L7 27V13z"/><path class="l" d="M20 11l9 4.500v9L20 29l-9-4.500v-9z"/><path class="st" d="M20 0v40M2.500 10l35 20M37.500 10l-35 20"/></svg></div>

      <div class="vt"><svg class="vi" viewBox="0 0 40 40"><path class="p" d="M13 27c0-4-7-8-7-15a14 14 0 0 1 28 0c0 7-7 11-7 15z"/><path class="l" d="M14 27h12v5H14zM16 32h8l-2 4h-4z"/><path class="st" d="M0 20l13-7 9 8L37 3"/><g class="dt"><circle cx="1.500" cy="20" r="1.600"/><circle cx="37" cy="4" r="1.600"/></g></svg></div>
      <div class="vt"><svg class="vi" viewBox="0 0 40 40"><path class="p" d="M6 32C-1 32-1 22 6 21c0-6 6-9 11-6 4-6 13-4 14 3 9-1 11 14 1 14z"/><path class="st" d="M11 22h6M20 22h10M9 26h12M24 26h8M11 30h6M20 30h12"/></svg></div>
      <div class="vt"><svg class="vi" viewBox="0 0 40 40"><rect class="w" x="0.600" y="3.500" width="38.800" height="32"/><rect class="l" x="0.600" y="3.500" width="38.800" height="5"/><circle class="p" cx="20" cy="22" r="10"/><path class="st" d="M18 19h-4a3 3 0 0 0 0 6h4M22 19h4a3 3 0 0 1 0 6h-4M15 22h10"/></svg></div>

      <div class="vt"><svg class="vi" viewBox="0 0 40 40"><rect class="o" x="9" y="11" width="7" height="13"/><rect class="l" x="16" y="3" width="7" height="21"/><rect class="d" x="23" y="8" width="7" height="16"/><path class="st" d="M6 1C3 1 3 3 3 6v9l-3 3 3 3v13c0 3 0 5 3 5M34 1c3 0 3 2 3 5v9l3 3-3 3v13c0 3 0 5-3 5M12 29h12M9 33h16M9 37h14"/></svg></div>
    </div>
    <div class="shelves">
      <div class="seclabel">ADD DATA</div>
      <div class="well multi">Add a dimension or measure</div>
      <div class="seclabel xaxis">X AXIS</div>
      <div class="well solid"><span>ds</span><svg viewBox="0 0 6 24"><circle cx="3" cy="3" r="2.200" fill="#555"/><circle cx="3" cy="12" r="2.200" fill="#555"/><circle cx="3" cy="21" r="2.200" fill="#555"/></svg></div>
      <div class="seclabel value">VALUE</div>
      <div class="well amber">Add a measure</div>
    </div>
    <div class="vscroll">
      <svg viewBox="0 0 14 10"><path d="M7 0l7 10H0z" fill="#8c8c8c"/></svg>
      <i></i>
      <svg viewBox="0 0 14 10"><path d="M7 10l7-10H0z" fill="#8c8c8c"/></svg>
    </div>
  </aside>

  <section class="sheet">
    <div class="sheettabs">
      <div class="stab"><span>Sheet 1</span><svg viewBox="0 0 20 12"><path d="M1 1l9 9 9-9" fill="none" stroke="#666" stroke-width="1.600"/></svg></div>
      <svg class="splus" viewBox="0 0 18 18"><path d="M9 0v18M0 9h18" stroke="#666" stroke-width="1.600"/></svg>
    </div>
    <div class="canvas">
      <article class="card">
        <h2 class="ctitle">Count of Records by Ds</h2>
        <svg class="chart" viewBox="725 463 1706 925">
          <g class="grid">
            <path d="M835 511.500H2370M835 621H2370M835 731H2370M835 841H2370M835 950.500H2370M835 1060H2370M835 1170H2370"/>
          </g>
          <g class="yl">
            <text x="823" y="516">350</text><text x="823" y="626">300</text><text x="823" y="736">250</text><text x="823" y="846">200</text><text x="823" y="955">150</text><text x="823" y="1065">100</text><text x="823" y="1175">50</text><text x="823" y="1285">0</text>
          </g>
          <path class="axis" d="M835 1280H2371M835 1272v8M1090 1272v8M1347 1272v8M1603 1272v8M1859 1272v8M2115 1272v8M2371 1272v8"/>
          <g class="xl">
            <text x="835" y="1304">Jul 10, 2025</text><text x="1090" y="1304">Jul 11, 2025</text><text x="1347" y="1304">Jul 12, 2025</text><text x="1603" y="1304">Jul 13, 2025</text><text x="1859" y="1304">Jul 14, 2025</text><text x="2115" y="1304">Jul 15, 2025</text><text x="2371" y="1304">Jul 16, 2025</text>
          </g>
          <polyline class="series" points="835,1064 1090,612 1347,1179 1603,1135 1859,1050 2115,883 2371,1270"/>
          <rect class="slider" x="837" y="1315" width="1533" height="22"/>
          <rect class="sh" x="835" y="1318" width="4" height="16" rx="2"/>
          <rect class="sh" x="2368" y="1318" width="4" height="16" rx="2"/>
          <text class="xt" x="1551" y="1369">ds</text>
          <path class="xc" d="M1585 1356l9 9 9-9"/>
        </svg>
        <div class="cactions">
          <svg viewBox="0 0 24 24"><path d="M1 18L14 2l3 3L5 20z" fill="none" stroke="#777" stroke-width="1.400"/><path d="M10 16h3v6h-3zM15 12h3v10h-3zM20 7h3v15h-3z" fill="#666"/></svg>
          <svg viewBox="0 0 24 24"><path d="M3 21L21 3M13 3h8v8M3 13v8h8" fill="none" stroke="#777" stroke-width="2"/></svg>
          <svg viewBox="0 0 24 24"><path d="M8 17c0-3-4-5-4-9a8 8 0 0 1 16 0c0 4-4 6-4 9zM9 21h6M13 5l2 3" fill="none" stroke="#777" stroke-width="1.700"/></svg>
          <svg class="more" viewBox="0 0 6 24"><circle cx="3" cy="4" r="2.100" fill="#222"/><circle cx="3" cy="12" r="2.100" fill="#222"/><circle cx="3" cy="20" r="2.100" fill="#222"/></svg>
          <i class="cbadge"></i>
        </div>
        <i class="hd tl"></i><i class="hd tc"></i><i class="hd tr"></i><i class="hd ml"></i><i class="hd mr"></i><i class="hd bl"></i><i class="hd bc"></i><i class="hd br"></i>
      </article>
    </div>
    <div class="sv"><svg viewBox="0 0 14 10"><path d="M7 0l7 10H0z" fill="#a5a5a5"/></svg><i></i><svg viewBox="0 0 14 10"><path d="M7 10l7-10H0z" fill="#a5a5a5"/></svg></div>
    <div class="sh-bar"><svg viewBox="0 0 10 14"><path d="M0 7l10-7v14z" fill="#a5a5a5"/></svg><i></i><svg viewBox="0 0 10 14"><path d="M10 7L0 0v14z" fill="#a5a5a5"/></svg></div>
  </section>
</main>

<footer class="taskbar">
  <div class="weather">
    <svg class="cloud" viewBox="0 0 36 28"><path d="M8 27C0 27 0 16 6 15 7 7 18 4 21 12c9-3 15 15 5 15z" fill="#a9c7f2"/></svg>
    <b class="wbadge">1</b>
    <div class="wtext"><span>15°C</span><span class="wsub">Bewölkt</span></div>
  </div>
  <svg class="winlogo" viewBox="0 0 36 36"><path d="M0 4a4 4 0 0 1 4-4h13.500v17.500H0zM18.500 0H32a4 4 0 0 1 4 4v13.500H18.500zM0 18.500h17.500V36H4a4 4 0 0 1-4-4zM18.500 18.500H36V32a4 4 0 0 1-4 4H18.500z" fill="url(#gWin)"/></svg>
  <div class="tsearch"><svg viewBox="0 0 24 24"><circle cx="10" cy="10" r="8" fill="none" stroke="#222" stroke-width="2"/><path d="M16 16l6 7" stroke="#222" stroke-width="2.400"/></svg><span>Search</span></div>
  <div class="tapps">
    <span class="ta"><svg viewBox="0 0 36 36"><rect x="0" y="9" width="27" height="25" rx="2" fill="#1c1c1c"/><rect x="9" y="1" width="27" height="23" rx="2" fill="#f5f5f5" opacity=".85"/></svg></span>
    <span class="ta"><svg viewBox="0 0 36 36"><path d="M1 35l3-10C-3 9 14-3 27 6c12 9 6 28-10 28-4 0-7-1-9-2z" fill="none" stroke="#1f8a5b" stroke-width="3"/><path d="M11 12c2-3 4 0 5 2 0 2-2 2-1 4 2 3 4 4 6 3 2-1 3 1 5 2 1 3-3 5-6 4-6-2-11-8-9-15z" fill="#1f8a5b"/></svg><b class="tbadge">9</b></span>
    <span class="ta dot"><svg viewBox="0 0 36 36"><path d="M0 5h14l4 4h18v25H0z" fill="#f7c843"/><path d="M0 3h14l4 4H0z" fill="#dba30f"/><rect x="6" y="23" width="24" height="11" rx="3" fill="#0f78d4"/></svg></span>
    <span class="ta"><svg viewBox="0 0 36 36"><path d="M10 6V1h16v5" fill="none" stroke="#2fb6ef" stroke-width="1.800"/><rect y="5" width="36" height="31" rx="3" fill="#14477f"/><rect x="10" y="13" width="7.500" height="7.500" fill="#f25022"/><rect x="18.500" y="13" width="7.500" height="7.500" fill="#7fba00"/><rect x="10" y="21" width="7.500" height="7.500" fill="#00a4ef"/><rect x="18.500" y="21" width="7.500" height="7.500" fill="#ffb900"/></svg></span>
    <span class="ta dot"><svg viewBox="0 0 36 36"><path d="M18 0C8 0 0 8 0 18c0 10 8 18 18 18 8 0 14-4 16-9-8 4-16 1-17-5-1-5 4-8 9-7 4 0 8 4 10 7 1-12-6-22-18-22z" fill="url(#gEdge)"/></svg></span>
    <span class="ta act"><svg viewBox="0 0 36 36"><circle cx="18" cy="18" r="18" fill="#34a853"/><path d="M18 0a18 18 0 0 1 15.600 9H18a9 9 0 0 0-8 5L3 5a18 18 0 0 1 15-5z" fill="#ea4335"/><path d="M33.600 9A18 18 0 0 1 17 36l7.500-13A9 9 0 0 0 26 9z" fill="#fbbc04"/><circle cx="18" cy="18" r="8.500" fill="#fff"/><circle cx="18" cy="18" r="6.800" fill="#4285f4"/></svg></span>
    <span class="ta dot"><svg viewBox="0 0 36 36"><path d="M26 0l10 5v26l-10 5-16-15-7 5-3-2v-12l3-2 7 5z" fill="#1f9cf0"/><path d="M26 9L15 18l11 9z" fill="#cfe2e8"/><path d="M26 0L3 21l-3-2v-2L26 0z" fill="#0a78c2"/><path d="M0 17l26 19v-5L3 12z" fill="#0a78c2"/></svg></span>
    <span class="ta dot"><svg viewBox="0 0 36 36"><rect y="2" width="36" height="32" rx="2" fill="#333"/><path d="M0 4a2 2 0 0 1 2-2h10v5H0z" fill="#777"/><rect x="12" y="2" width="12" height="5" fill="#aaa"/><path d="M5 12l8 6-8 6" fill="none" stroke="#ccc" stroke-width="2.400"/><rect x="17" y="24" width="13" height="3" fill="#eee"/></svg></span>
    <span class="ta dot"><svg viewBox="0 0 36 36"><rect x="8" y="0" width="28" height="9" fill="#41a5ee"/><rect x="8" y="9" width="28" height="9" fill="#2b7cd3"/><rect x="8" y="18" width="28" height="9" fill="#185abd"/><rect x="8" y="27" width="28" height="9" fill="#103f91"/><rect y="8" width="20" height="20" rx="1" fill="#185abd"/><text class="wordw" x="10" y="23">W</text></svg></span>
    <span class="ta dot"><svg viewBox="0 0 36 36"><path d="M18 0C8 0 0 8 0 18c0 10 8 18 18 18 8 0 14-4 16-9-8 4-16 1-17-5-1-5 4-8 9-7 4 0 8 4 10 7 1-12-6-22-18-22z" fill="url(#gEdge)"/></svg></span>
    <span class="ta dot"><svg viewBox="0 0 36 36"><rect width="26" height="34" rx="2" fill="#eeeeee"/><path d="M4 3h4v5H4zM11 3h4v5h-4zM18 3h4v5h-4zM4 12h4v5H4zM4 21h4v5H4z" fill="#d6451f"/><path d="M18 12v20M18 22l13-3" fill="none" stroke="#888" stroke-width="3"/><circle cx="33" cy="18" r="3" fill="none" stroke="#2b9ddd" stroke-width="2"/><circle cx="19" cy="34" r="3" fill="none" stroke="#2b9ddd" stroke-width="2"/></svg></span>
  </div>
  <div class="tray">
    <svg class="tc1" viewBox="0 0 16 10"><path d="M2 9l6-7 6 7" fill="none" stroke="#222" stroke-width="1.600"/></svg>
    <svg class="tr2" viewBox="0 0 28 34"><path d="M3 4h22v20H3zM14 24v6M7 31h14" fill="none" stroke="#444" stroke-width="1.500"/><rect x="6" y="1" width="7" height="15" fill="#fff" stroke="#444"/></svg>
    <svg class="tr2" viewBox="0 0 28 34"><path d="M3 14a11 11 0 0 1 18-8M25 20A11 11 0 0 1 7 28M21 1v6h-6M7 33v-6h6" fill="none" stroke="#333" stroke-width="1.500"/><circle cx="19" cy="22" r="8" fill="#f59d0e"/></svg>
    <div class="lang"><span>ENG</span><span>DE</span></div>
    <svg class="tr3" viewBox="0 0 26 26"><path d="M1 9a17 17 0 0 1 24 0M5 13a11.500 11.500 0 0 1 16 0M9 17a6 6 0 0 1 8 0" fill="none" stroke="#111" stroke-width="1.800"/><circle cx="13" cy="22" r="2" fill="#111"/></svg>
    <svg class="tr3" viewBox="0 0 26 26"><path d="M2 9h5l7-6v20l-7-6H2zM18 8c2 3 2 7 0 10M21 5c4 5 4 11 0 16" fill="none" stroke="#111" stroke-width="1.600"/></svg>
    <svg class="tr3" viewBox="0 0 26 26"><rect x="1" y="6" width="21" height="14" rx="2" fill="none" stroke="#111" stroke-width="1.800"/><rect x="4" y="9" width="8" height="8" fill="#111"/><rect x="23" y="10" width="2" height="6" fill="#111"/></svg>
    <div class="clock"><span>06:35</span><span>15/07/2025</span></div>
  </div>
</footer>
</body>
</html>
```

FILE: styles.css
```css
* { box-sizing: border-box; }
html, body { margin: 0; padding: 0; }
body { width: 2560px; height: 1600px; overflow: hidden; font-family: Roboto, "Liberation Sans", sans-serif; color: #16191f; background: #fff; }
i, b { font-style: normal; }
button { font: inherit; }
.defs { position: absolute; }

/* Browser chrome */
.tabstrip { height: 60px; background: #d3e9e2; display: flex; font-family: "Open Sans", sans-serif; position: relative; }
.chev { width: 41px; height: 42px; margin: 9px 6px 9px 9px; border: 0; border-radius: 14px; background: #c6f8ec; display: flex; align-items: center; justify-content: center; padding: 0; flex: none; }
.tab { width: 167.1px; height: 51px; margin-top: 9px; padding: 9px 0 0 16px; flex: none; display: flex; position: relative; align-items: flex-start; }
.tab::after { content: ""; position: absolute; right: 0; top: 9px; height: 24px; width: 2px; background: #92d6c7; }
.tab.last::after, .tab.active::after { display: none; }
.fav { width: 24px; height: 24px; flex: none; }
.tt { width: 62px; margin-left: 12px; height: 24px; line-height: 24px; font-size: 18px; white-space: nowrap; overflow: hidden; color: #3c4a46; -webkit-mask-image: linear-gradient(90deg, #000 65%, transparent); mask-image: linear-gradient(90deg, #000 65%, transparent); flex: none; }
.tx { width: 16px; height: 16px; margin: 4px 0 0 16px; color: #3c4a46; flex: none; }
.tx.dark { color: #111; margin-left: 10px; }
.tab.active { width: 158px; margin-left: 4px; padding-left: 12px; background: #f5fbf8; border-radius: 16px 16px 0 0; }
.newtab { width: 20px; height: 20px; margin: 20px 0 0 18px; flex: none; }
.winctl { margin-left: auto; display: flex; padding: 20px 24px 0 0; gap: 48px; }
.winctl svg { width: 20px; height: 20px; }

.addr { height: 68px; background: #f5fbf8; display: flex; align-items: center; padding-left: 20px; gap: 31px; font-family: "Open Sans", sans-serif; border-radius: 12px 12px 0 0; }
.nv { width: 24px; height: 24px; flex: none; }
.url { width: 2010px; height: 51px; margin: 2px 0 0 -5px; background: #deeee9; border-radius: 26px; display: flex; align-items: center; padding: 0 22px 0 7px; flex: none; }
.chip { width: 36px; height: 36px; border-radius: 50%; background: #fff; display: flex; align-items: center; justify-content: center; flex: none; }
.urltext { margin-left: 12px; font-size: 20.14px; color: #1f2d2a; white-space: nowrap; }
.star { width: 26px; height: 26px; margin-left: auto; }
.navright { display: flex; align-items: center; gap: 27px; margin: 2px 0 0 -5px; }
.ni { width: 28px; height: 28px; flex: none; }
.navsep { width: 2px; height: 32px; background: #b7ece0; margin: 0 -2px; }
.avatar { width: 30px; height: 30px; border-radius: 50%; background: #7d8b98; color: #fff; font-size: 14px; text-align: center; line-height: 30px; flex: none; }
.dots { width: 12px; height: 28px; margin-left: 5px; }

.bookmarks { height: 52px; background: #f5fbf8; display: flex; align-items: center; padding: 0 0 8px 19px; font-family: "Open Sans", sans-serif; font-size: 17.5px; color: #3c4a46; }
.appsgrid { width: 22px; height: 22px; }
.bm.apps { margin-left: 10px; }
.bmchip { height: 30px; line-height: 30px; padding: 0 10px; background: #f2f3f4; border-radius: 8px; margin-left: 13px; font-weight: 600; font-size: 16.5px; color: #3f4a48; white-space: nowrap; }
.bmgroup { width: 22px; height: 22px; margin-left: 24px; }
.bmsep { width: 2px; height: 24px; background: #b7ece0; margin-left: auto; }
.bmfolder { width: 26px; height: 24px; margin: 0 10px 0 26px; }
.bm { white-space: nowrap; }
.bookmarks .bm:last-child { margin-right: 20px; }

/* QuickSight header */
.qs-head { height: 48px; margin-top: 2px; background: #262626; display: flex; align-items: center; padding-left: 29px; color: #fff; position: relative; }
.qslogo { width: 27px; height: 27px; flex: none; }
.qsname { margin-left: 8px; width: 114px; font-size: 24.5px; letter-spacing: -.2px; white-space: nowrap; }
.qssep { width: 1px; height: 30px; background: #555; margin-left: 18px; }
.qsstar { width: 22px; height: 22px; margin-left: 16px; }
.qstitle { margin-left: 4px; font-size: 18.5px; font-weight: 500; border-bottom: 1px solid #111; width: 457px; height: 34px; line-height: 32px; padding-left: 3px; }
.qsright { margin-left: auto; display: flex; align-items: center; padding-right: 26px; }
.qsi { width: 28px; height: 28px; }
.qssep2 { width: 1px; height: 30px; background: #666; margin: 0 24px 0 21px; }
.qsi.small { width: 20px; height: 20px; }
.qsi.small + .qsi.small { margin-left: 24px; }

.menu { height: 60px; background: #3b6e98; display: flex; align-items: center; gap: 31px; padding-left: 27px; color: #fff; font-size: 18.9px; font-weight: 500; }
.menuright { margin-left: auto; display: flex; align-items: center; padding-right: 14px; }
.actual { font-size: 17.5px; font-weight: 500; }
.caret { width: 16px; height: 10px; margin-left: 10px; }
.publish { margin-left: 23px; width: 97px; height: 30px; border: 1.5px solid #fff; border-radius: 6px; background: transparent; color: #fff; font-size: 16.5px; font-weight: 500; padding: 0; }

.toolbar { height: 54px; background: #fff; border-bottom: 2px solid #e6e6e6; display: flex; align-items: center; gap: 6px; padding-left: 21px; }
.tb { width: 42px; height: 42px; display: flex; align-items: center; justify-content: center; border-radius: 8px; flex: none; }
.tb svg { width: 27px; height: 28px; }
.tb.on { background: #424242; }
.tb.first { margin-left: -2px; }
.tbsep { width: 2px; height: 36px; background: #8f8f8f; margin: 0 3px 0 4px; flex: none; }
.addlbl { width: 36px; margin-left: 10px; font-size: 16px; color: #5f6b7a; }

/* Work area */
.work { height: 1184px; display: flex; overflow: hidden; background: #fff; }
.datapane { width: 354px; flex: none; border-right: 2px solid #ececec; }
.ptitle { display: flex; align-items: center; height: 68px; padding: 0 24px; font-size: 27px; font-weight: 400; position: relative; }
.pti { width: 19px; height: 24px; flex: none; margin-right: 12px; }
.pclose { width: 18px; height: 18px; margin-left: auto; }
.dsrow { display: flex; justify-content: space-between; margin: -2px 16px 0 18px; font-size: 18px; color: #5f6b7a; height: 22px; line-height: 22px; }
.dsselect { height: 36px; margin: 3px 16px 0 18px; border: 1.5px solid #aab7b8; border-radius: 6px; display: flex; align-items: center; padding: 0 11px; }
.spice { width: 70px; height: 24px; line-height: 24px; border-radius: 12px; background: #b8790c; color: #1a1a1a; text-align: center; font-size: 16px; flex: none; }
.dsname { margin-left: 7px; font-size: 18.8px; color: #111; white-space: nowrap; }
.dsarrow { width: 15px; height: 9px; margin-left: auto; margin-right: 7px; }
.fsearch { height: 36px; margin: 8px 16px 0 18px; border: 1.5px solid #aab7b8; border-radius: 6px; display: flex; align-items: center; padding: 0 11px; font-size: 18.5px; color: #8a959e; }
.fsearch svg { width: 19px; height: 20px; margin-left: auto; margin-right: 2px; }
.calc { height: 34px; width: 207px; margin: 9px 18px 0; border: 1.5px solid #2e6e9e; background: #fff; border-radius: 6px; color: #2e6e9e; font-size: 17px; display: flex; align-items: center; padding: 0 10px; white-space: nowrap; font-weight: 400; letter-spacing: .2px; }
.calc svg { width: 13px; height: 13px; margin-right: 13px; flex: none; }
.field { height: 36px; margin: 13px 7px 0; border-radius: 18px; display: flex; align-items: center; padding: 0 0 0 17px; font-size: 18.5px; color: #111; }
.field svg { width: 18px; height: 18px; margin-right: 11px; }
.field.sel { background: #f5faff; border: 1.5px solid #4a8ac9; padding-left: 15.5px; margin-right: 5px; }
.field.sel + .field { margin-top: 2px; height: 40px; }

.vispane { width: 356px; flex: none; position: relative; border-right: 2px solid #e6e6e6; overflow: hidden; }
.ptitle.vis { padding: 0 46px 0 23px; }
.ptitle.vis .pti { width: 20px; height: 21px; margin-right: 11px; }
.addbtn { display: flex; width: 115px; height: 30px; margin: -4px 0 0 19px; border: 1.5px solid #2e6e9e; border-radius: 6px; color: #2e6e9e; font-size: 16.5px; }
.addmain { width: 80px; display: flex; align-items: center; padding-left: 12px; border-right: 1.5px solid #2e6e9e; }
.addmain svg { width: 13px; height: 13px; margin-right: 7px; }
.addcaret { flex: 1; display: flex; align-items: center; justify-content: center; }
.addcaret svg { width: 15px; height: 9px; }
.seclabel { margin-left: 19px; font-size: 15px; letter-spacing: .3px; color: #5f6b7a; height: 20px; line-height: 20px; }
.seclabel.first { margin-top: 19px; }
.seclabel.xaxis { margin-top: 29px; }
.seclabel.value { margin-top: 39px; }
.vgrid { display: grid; grid-template-columns: repeat(3, 75px); grid-auto-rows: 56px; gap: 6px; margin: 9px 0 0 19px; }
.vt { border: 1.5px solid #cbcbcb; border-radius: 8px; background: #fff; display: flex; align-items: flex-start; justify-content: center; padding-top: 6.5px; }
.vt.cur { background: #ebebeb; border-color: #16191f; }
.vi { width: 40px; height: 40px; overflow: visible; stroke: #161e2d; stroke-width: 1.2px; fill: none; }
.vi .o { fill: #f4ab33; }
.vi .l { fill: #9db8cc; }
.vi .d { fill: #38709d; }
.vi .n { fill: #25476a; }
.vi .p { fill: #e6edf3; }
.vi .c { fill: #fff5e8; }
.vi .w { fill: #fff; }
.vi .st { fill: none; }
.vi .ln { fill: none; stroke-width: 1px; }
.vi .lb { stroke: #9db8cc; }
.vi .db { stroke: #38709d; }
.vi .ob { stroke: #f4ab33; }
.vi .lb circle { fill: #9db8cc; }
.vi .db circle { fill: #38709d; }
.vi .ob circle { fill: #f4ab33; }
.vi .dt circle { fill: #161e2d; stroke: none; }
.shelves { margin-top: 13px; border-top: 2px solid #e6e6e6; padding-top: 20px; }
.well { width: 295px; height: 34px; margin: 14px 0 0 19px; border-radius: 18px; font-size: 18.5px; color: #6b7280; display: flex; align-items: center; padding: 0 14px; white-space: nowrap; }
.well.multi { border: 3px dotted #b8790c; border-left-color: #3a7fc1; border-top-color: #7e8b63; border-bottom-color: #7e8b63; background: linear-gradient(90deg, #eef6fc, #fdf8f0); }
.well.solid { height: 35px; border: 1.5px solid #3a7fc1; background: #f5faff; color: #111; justify-content: space-between; padding: 0 11px 0 12px; }
.well.solid svg { width: 6px; height: 24px; }
.well.amber { margin-top: 13px; border: 3px dotted #c47a12; background: #fdf9f2; }
.vscroll { position: absolute; right: 4px; top: 8px; bottom: 6px; width: 15px; display: flex; flex-direction: column; align-items: center; }
.vscroll svg { width: 15px; height: 10px; flex: none; }
.vscroll i { width: 13px; height: 970px; margin: 10px 0 170px; background: #8c8c8c; border-radius: 7px; flex: none; }

/* Sheet */
.sheet { flex: 1; position: relative; background: #f5f5f5; min-width: 0; }
.sheettabs { height: 58px; background: #fff; border-bottom: 2px solid #e6e6e6; display: flex; align-items: flex-end; padding-left: 8px; }
.stab { width: 122px; height: 47px; border: 1.5px solid #e2e2e2; border-bottom: 0; background: #fafafa; display: flex; align-items: center; padding-left: 15px; font-size: 19.5px; font-weight: 500; color: #222; }
.stab svg { width: 19px; height: 11px; margin-left: 15px; }
.splus { width: 18px; height: 18px; margin: 0 0 13px 15px; }
.canvas { padding: 12px 0 0 12px; }
.card { position: relative; width: 1712px; height: 977px; background: #fff; border: 3px solid #222; display: flex; flex-direction: column; }
.ctitle { margin: 0; padding: 21px 0 0 12px; height: 46px; font-size: 21px; line-height: 26px; font-weight: 400; color: #222; flex: none; }
.chart { width: 1706px; height: 925px; flex: none; display: block; }
.grid path { fill: none; stroke: #e8e8e8; stroke-width: 2; }
.axis { fill: none; stroke: #333; stroke-width: 2; }
.yl text { font-size: 15px; fill: #333; text-anchor: end; }
.xl text { font-size: 15px; fill: #333; text-anchor: middle; }
.series { fill: none; stroke: #a9daee; stroke-width: 3; stroke-linejoin: round; }
.slider { fill: #d6eaf5; stroke: #cfdfe8; stroke-width: 1; }
.sh { fill: #aab5bd; stroke: #8b98a1; stroke-width: 1; }
.xt { font-size: 21px; fill: #222; }
.xc { fill: none; stroke: #777; stroke-width: 2; }
.cactions { position: absolute; left: 1572px; top: 6px; width: 128px; height: 35px; background: #fff; border: 1.5px solid #555; border-radius: 14px; box-shadow: 0 4px 10px rgba(0,0,0,.3); display: flex; align-items: center; padding: 0 4px 0 5px; gap: 8px; }
.cactions svg { width: 21px; height: 21px; flex: none; }
.cactions svg.more { width: 6px; margin-left: 13px; }
.cbadge { position: absolute; left: 81px; top: -1px; width: 12px; height: 12px; border-radius: 50%; background: #4a9fdc; }
.hd { position: absolute; width: 10px; height: 10px; background: #fff; border: 1.5px solid #111; }
.tl, .tc, .tr { top: -6.5px; }
.ml, .mr { top: calc(50% - 5px); }
.bl, .bc, .br { bottom: -6.5px; }
.tl, .ml, .bl { left: -6.5px; }
.tc, .bc { left: calc(50% - 5px); }
.tr, .mr, .br { right: -6.5px; }
.sv { position: absolute; right: 2px; top: 66px; bottom: 3px; width: 10px; display: flex; flex-direction: column; align-items: center; }
.sv svg { width: 14px; height: 10px; flex: none; }
.sv i { width: 10px; height: 1040px; margin: 3px 0 auto; background: #a5a5a5; border-radius: 5px; }
.sh-bar { position: absolute; left: 4px; right: 2px; bottom: 3px; height: 14px; display: flex; align-items: center; }
.sh-bar svg { width: 9px; height: 13px; flex: none; }
.sh-bar i { width: 1386px; height: 13px; margin: 0 auto 0 4px; background: #a5a5a5; border-radius: 7px; }

/* Taskbar */
.taskbar { height: 72px; background: #cfe2e8; border-top: 3px solid #aebfc5; display: flex; align-items: center; font-family: "Open Sans", sans-serif; position: relative; }
.weather { width: 732px; height: 100%; flex: none; position: relative; display: flex; padding-left: 75px; align-items: center; }
.cloud { position: absolute; left: 28px; top: 21px; width: 37px; height: 28px; }
.wbadge { position: absolute; left: 45px; top: 10px; width: 24px; height: 24px; border-radius: 50%; background: #c42b1c; color: #fff; font-size: 15px; font-weight: 400; text-align: center; line-height: 24px; }
.wtext { display: flex; flex-direction: column; font-size: 16.5px; line-height: 24px; color: #1a1a1a; margin-top: -3px; }
.wsub { color: #444; font-size: 17.5px; }
.winlogo { width: 36px; height: 36px; flex: none; }
.tsearch { width: 328px; height: 46px; margin-left: 19px; border-radius: 23px; background: #f0f5f7; border: 2px solid #bfd2d8; display: flex; align-items: center; padding-left: 16px; font-size: 19.5px; color: #444; flex: none; }
.tsearch svg { width: 23px; height: 23px; margin-right: 14px; }
.tapps { display: flex; gap: 30px; margin-left: 19px; flex: none; }
.ta { width: 36px; height: 36px; position: relative; flex: none; }
.ta > svg { width: 36px; height: 36px; display: block; }
.ta.dot::after { content: ""; position: absolute; left: 13px; bottom: -14px; width: 9px; height: 5px; border-radius: 3px; background: #6c7a80; }
.ta.act::before { content: ""; position: absolute; left: -10px; top: -10px; width: 50px; height: 57px; border-radius: 6px; background: #e8f2f6; box-shadow: 4px 0 0 #dbe9ee; }
.ta.act > svg { position: relative; }
.ta.act::after { content: ""; position: absolute; left: -1px; bottom: -14px; width: 24px; height: 5px; margin-left: 7px; border-radius: 3px; background: #23838f; }
.tbadge { position: absolute; left: 20px; top: -8px; width: 24px; height: 24px; border-radius: 50%; background: #23838f; color: #fff; font-size: 16px; font-weight: 400; text-align: center; line-height: 24px; }
.wordw { font-size: 14px; font-weight: 700; fill: #fff; text-anchor: middle; font-family: "Open Sans", sans-serif; }
.tray { position: absolute; left: 2108px; right: 29px; top: 0; height: 100%; display: flex; align-items: center; color: #1a1a1a; }
.tc1 { width: 18px; height: 11px; margin-right: 26px; flex: none; }
.tr2 { width: 24px; height: 32px; margin-right: 24px; flex: none; }
.lang { display: flex; flex-direction: column; align-items: center; font-size: 19px; line-height: 26px; margin: 0 30px 0 4px; width: 34px; flex: none; }
.tr3 { width: 26px; height: 26px; margin-right: 10px; flex: none; }
.clock { display: flex; flex-direction: column; align-items: flex-end; margin-left: auto; font-size: 20px; line-height: 26px; margin-top: -3px; }
```
